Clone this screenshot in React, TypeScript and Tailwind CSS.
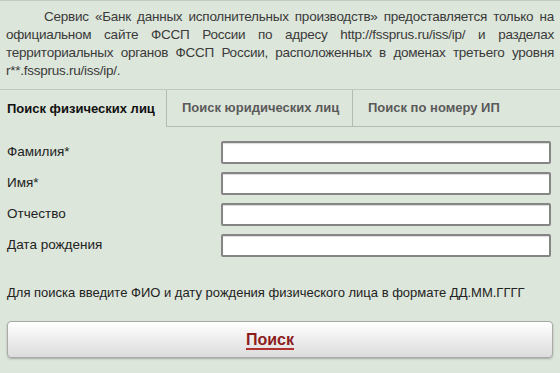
import { useState } from 'react';

const introLines = [
  'Сервис «Банк данных исполнительных производств» предоставляется только на',
  'официальном сайте ФССП России по адресу http://fssprus.ru/iss/ip/ и разделах',
  'территориальных органов ФССП России, расположенных в доменах третьего уровня',
];

const tabs = ['Поиск физических лиц', 'Поиск юридических лиц', 'Поиск по номеру ИП'];

const fields = [
  { id: 'lastname', label: 'Фамилия*' },
  { id: 'firstname', label: 'Имя*' },
  { id: 'patronymic', label: 'Отчество' },
  { id: 'birthdate', label: 'Дата рождения' },
];

export default function App() {
  const [activeTab, setActiveTab] = useState(0);
  const [values, setValues] = useState<Record<string, string>>({});

  return (
    <main className="w-[560px] h-[373px] overflow-hidden bg-[#dde6da] border-t border-[#c3ccc1] font-['Liberation_Sans',Arial,sans-serif]">
      <div className="px-[6px] pt-[7px] text-[13.5px] leading-[18px] tracking-[-0.25px] text-[#3a3a3a]">
        {introLines.map((line, i) => (
          <div
            key={line}
            className={`whitespace-nowrap text-justify [text-align-last:justify] ${i === 0 ? 'pl-[38px]' : ''}`}
          >
            {line}
          </div>
        ))}
        <div>r**.fssprus.ru/iss/ip/.</div>
      </div>

      <div className="mt-[9px] flex h-[38px] border-t border-[#c2cac0] text-[13px] font-bold">
        {tabs.map((tab, i) => {
          const isActive = i === activeTab;
          const width = i === 0 ? 'w-[166px]' : i === 1 ? 'w-[186px]' : 'flex-1';
          return (
            <button
              key={tab}
              onClick={() => setActiveTab(i)}
              className={`${width} flex items-center text-left ${
                i === 0 ? 'pl-[7px]' : 'pl-[15px] border-l border-[#b4bcb2]'
              } ${isActive ? 'text-[#111]' : 'text-[#5a5a5a] border-b'} border-[#b4bcb2]`}
            >
              {tab}
            </button>
          );
        })}
      </div>

      <div className="mt-[14px] flex flex-col gap-[8px] pr-[9px]">
        {fields.map((field) => (
          <div key={field.id} className="flex items-center">
            <label htmlFor={field.id} className="w-[221px] pl-[7px] text-[13.5px] text-[#222]">
              {field.label}
            </label>
            <input
              id={field.id}
              value={values[field.id] ?? ''}
              onChange={(e) => setValues({ ...values, [field.id]: e.target.value })}
              className="h-[23px] flex-1 rounded-[2px] border-2 border-[#858585] bg-white px-1 text-[13px] outline-none shadow-[inset_0_1px_1px_rgba(0,0,0,0.15)]"
            />
          </div>
        ))}
      </div>

      <p className="mt-[28px] pl-[7px] text-[13px] leading-[16px] text-[#222]">
        Для поиска введите ФИО и дату рождения физического лица в формате ДД.ММ.ГГГГ
      </p>

      <div className="mt-[20px] px-[7px]">
        <button className="flex h-[37px] w-full items-center justify-center rounded-[4px] border border-[#a9a9a9] bg-gradient-to-b from-white to-[#dcdcdc] pr-[20px] shadow-[0_1px_2px_rgba(0,0,0,0.25)]">
          <span className="text-[16px] font-bold text-[#8c1c1c] underline decoration-[#b03030] decoration-2 underline-offset-[3px]">
            Поиск
          </span>
        </button>
      </div>
    </main>
  );
}
